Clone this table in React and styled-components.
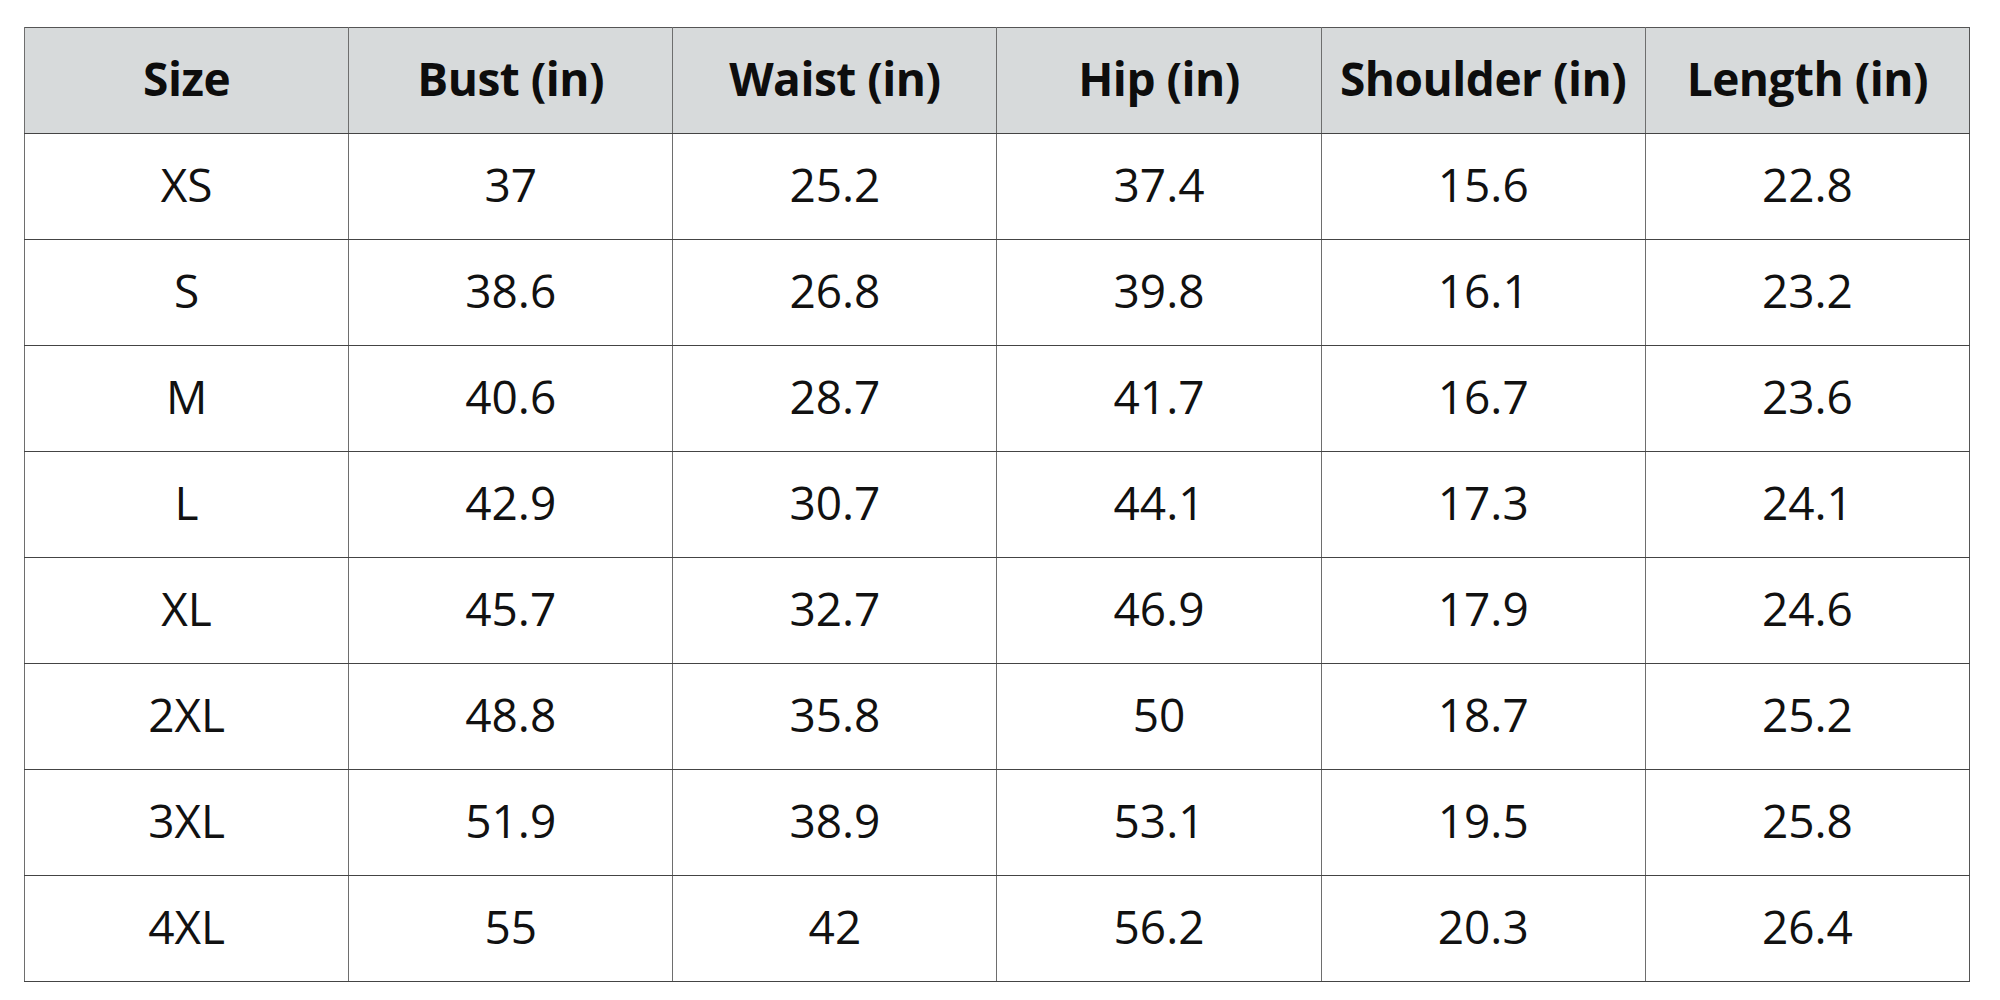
import React from 'react'
import styled, { createGlobalStyle } from 'styled-components'

const GlobalStyle = createGlobalStyle`
  html, body {
    margin: 0;
    padding: 0;
    background: #ffffff;
  }
  body {
    font-family: "Open Sans", "Liberation Sans", sans-serif;
    color: #111;
  }
`

const Page = styled.div`
  width: 2000px;
  height: 1000px;
  padding: 27px 30px 0 24px;
  box-sizing: border-box;
`

const Table = styled.table`
  width: 1946px;
  border-collapse: collapse;
  table-layout: fixed;
  border: 1.5px solid #555;
`

const HeadCell = styled.th`
  height: 100px;
  padding: 0 0 5px;
  background: #d7dadb;
  font-size: 46px;
  font-weight: 700;
  color: #0d0d0d;
  text-align: center;
  border-left: 1.5px solid #6e6e6e;
  border-bottom: 1.5px solid #444;
  white-space: nowrap;
  letter-spacing: -0.5px;
`

const Cell = styled.td`
  height: 100px;
  padding: 0 0 5px;
  font-size: 46px;
  font-weight: 400;
  color: #111;
  text-align: center;
  border-left: 1.5px solid #6e6e6e;
  border-bottom: 1.5px solid #444;
`

const columns = ['Size', 'Bust (in)', 'Waist (in)', 'Hip (in)', 'Shoulder (in)', 'Length (in)']

const rows = [
  ['XS', '37', '25.2', '37.4', '15.6', '22.8'],
  ['S', '38.6', '26.8', '39.8', '16.1', '23.2'],
  ['M', '40.6', '28.7', '41.7', '16.7', '23.6'],
  ['L', '42.9', '30.7', '44.1', '17.3', '24.1'],
  ['XL', '45.7', '32.7', '46.9', '17.9', '24.6'],
  ['2XL', '48.8', '35.8', '50', '18.7', '25.2'],
  ['3XL', '51.9', '38.9', '53.1', '19.5', '25.8'],
  ['4XL', '55', '42', '56.2', '20.3', '26.4'],
]

const App = () => {
  return (
    <Page>
      <GlobalStyle />
      <Table>
        <thead>
          <tr>
            {columns.map((c) => (
              <HeadCell key={c}>{c}</HeadCell>
            ))}
          </tr>
        </thead>
        <tbody>
          {rows.map((r) => (
            <tr key={r[0]}>
              {r.map((v, i) => (
                <Cell key={i}>{v}</Cell>
              ))}
            </tr>
          ))}
        </tbody>
      </Table>
    </Page>
  )
}

export default App
